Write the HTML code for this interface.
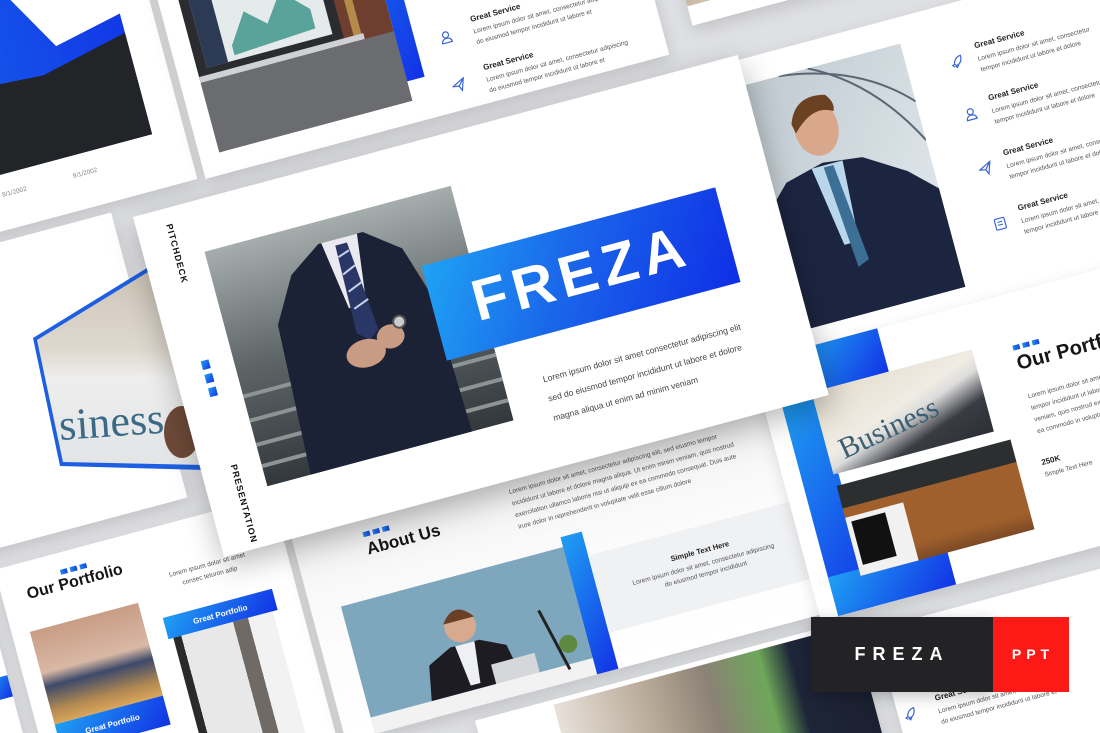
<!DOCTYPE html>
<html><head><meta charset="utf-8">
<style>
*{margin:0;padding:0;box-sizing:border-box}
html,body{width:1100px;height:733px;overflow:hidden}
body{background:#dfe0e3;font-family:"Liberation Sans",Arial,sans-serif;position:relative}
.board{position:absolute;left:0;top:0;transform:translate(133px,217px) rotate(-15deg);transform-origin:0 0}
.s{position:absolute;background:#fff;overflow:hidden;box-shadow:0 6px 16px rgba(0,0,0,.13)}
.a{position:absolute}
.lo{position:absolute;font-size:6.5px;line-height:11px;color:#555;white-space:nowrap}
.gs{position:absolute;font-size:8px;font-weight:bold;color:#222;white-space:nowrap}
.sq{position:absolute;display:flex;gap:3px}
.sq i{display:block;width:7px;height:5px;background:linear-gradient(90deg,#1e8ef0,#1540e0)}
.blue{background:linear-gradient(135deg,#1fa0f3,#1232e6)}
</style></head><body>

<div class="board">
  <div class="s" style="left:-600px;top:-400px;width:672px;height:380px">
    <svg class="a" style="left:270px;top:140px" width="370" height="185">
      <defs><linearGradient id="cb" x1="0" x2="1"><stop offset="0" stop-color="#1a7ef0"/><stop offset="1" stop-color="#1238e6"/></linearGradient></defs>
      <polygon points="0,80 40,125 110,30 190,55 260,5 300,75 370,60 370,185 0,185" fill="url(#cb)"/>
      <polygon points="0,130 60,110 120,125 200,95 280,100 370,80 370,185 0,185" fill="#232427"/>
    </svg>
    <div class="lo" style="left:260px;top:340px;color:#888;word-spacing:46px">5/1/2002 6/1/2002 7/1/2002 8/1/2002 9/1/2002</div>
  </div>
  <div class="s" style="left:80px;top:-380px;width:480px;height:362px">
    <svg class="a" style="left:20px;top:0" width="200" height="340">
      <rect width="200" height="340" fill="#5a5552"/>
      <rect x="130" y="0" width="70" height="340" fill="#6e3f2e"/>
      <rect x="160" y="0" width="8" height="340" fill="#b58a4a"/>
      <polygon points="0,150 150,150 150,265 0,265" fill="#2a2c30"/>
      <polygon points="10,160 140,160 140,255 10,255" fill="#e4ebea"/>
      <rect x="10" y="160" width="22" height="95" fill="#2d3a55"/>
      <polygon points="40,240 60,210 80,228 100,200 125,225 125,245 40,250" fill="#5aa39a"/>
      <rect x="0" y="268" width="200" height="72" fill="#6a6c70"/>
      <rect x="0" y="262" width="170" height="6" fill="#cfd1d4"/>
    </svg>
    <div class="a blue" style="left:220px;top:0;width:18px;height:320px"></div>
    <svg class="a" style="left:262px;top:230px" width="14" height="14"><path d="M1 7L13 1L9 13L7 8Z" fill="none" stroke="#3a66d6" stroke-width="1.2"/></svg>
    <div class="gs" style="left:297px;top:222px">Great Service</div>
    <div class="lo" style="left:297px;top:234px">Lorem ipsum dolor sit amet, consectetur adipiscing<br>do eiusmod tempor incididunt ut labore et</div>
    <svg class="a" style="left:262px;top:280px" width="14" height="14"><circle cx="7" cy="5" r="3" fill="none" stroke="#3a66d6" stroke-width="1.2"/><path d="M2 13c0-3 2.5-4.5 5-4.5s5 1.5 5 4.5z" fill="none" stroke="#3a66d6" stroke-width="1.2"/></svg>
    <div class="gs" style="left:297px;top:272px">Great Service</div>
    <div class="lo" style="left:297px;top:284px">Lorem ipsum dolor sit amet, consectetur adipiscing<br>do eiusmod tempor incididunt ut labore et</div>
    <svg class="a" style="left:262px;top:330px" width="14" height="14"><path d="M1 7L13 1L9 13L7 8Z M7 8L13 1" fill="none" stroke="#3a66d6" stroke-width="1.2"/></svg>
    <div class="gs" style="left:297px;top:322px">Great Service</div>
    <div class="lo" style="left:297px;top:334px">Lorem ipsum dolor sit amet, consectetur adipiscing<br>do eiusmod tempor incididunt ut labore et</div>
  </div>
  <div class="s" style="left:590px;top:-400px;width:626px;height:360px">
    <div class="a" style="left:0;top:0;width:270px;height:340px;background:linear-gradient(90deg,#c9b8a4,#efe9e2 40%,#5d5f63 70%,#d8d8d8)"></div>
  </div>
  <div class="s" style="left:-680px;top:-10px;width:660px;height:295px">
    <div class="lo" style="left:390px;top:158px">Lorem ipsum dolor sit amet<br>tempor incididunt ut labore<br>veniam, quis nostrud exerc<br>ea commodo in voluptate</div>
  </div>
  <div class="s" style="left:-860px;top:305px;width:620px;height:352px">
    <div class="a blue" style="left:595px;top:105px;width:25px;height:22px"></div>
  </div>
  <div class="s" style="left:-225px;top:305px;width:287px;height:352px">
    <div class="sq" style="left:63px;top:17px"><i></i><i></i><i></i></div>
    <div class="a" style="left:25px;top:24px;font-size:16px;font-weight:bold;color:#151515;white-space:nowrap">Our Portfolio</div>
    <div class="lo" style="left:150px;top:45px;width:113px;text-align:center">Lorem ipsum dolor sit amet<br>consec teturon adip</div>
    <div class="a" style="left:18px;top:69px;width:112px;height:96px;background:linear-gradient(180deg,#c99d85 0%,#d8b8a5 45%,#3d4a6a 60%,#b48a52 85%,#d9a65a)"></div>
    <div class="a blue" style="left:18px;top:165px;width:112px;height:30px;color:#fff;font-size:8px;font-weight:bold;text-align:center;padding-top:10px">Great Portfolio</div>
    <div class="a blue" style="left:150px;top:90px;width:113px;height:22px;color:#fff;font-size:8px;font-weight:bold;text-align:center;padding-top:7px">Great Portfolio</div>
    <div class="a" style="left:155px;top:112px;width:103px;height:130px;background:linear-gradient(90deg,#2a2a2a 0 8%,#e8e8e8 8% 60%,#6f6a66 60% 75%,#f2f2f2 75%)"></div>
  </div>
  <div class="s" style="left:70px;top:300px;width:500px;height:262px;background:linear-gradient(180deg,#e6e6e8 0%,#fafafa 45%,#fff)">
    <div class="sq" style="left:70px;top:64px"><i></i><i></i><i></i></div>
    <div class="a" style="left:70px;top:72px;font-size:17px;font-weight:bold;color:#151515">About Us</div>
    <div class="lo" style="left:222px;top:58px;line-height:12px">Lorem ipsum dolor sit amet, consectetur adipiscing elit, sed eiusmo tempor<br>incididunt ut labore et dolore magna aliqua. Ut enim minim veniam, quis nostrud<br>exercitation ullamco laboris nisi ut aliquip ex ea commodo consequat. Duis aute<br>irure dolor in reprehenderit in voluptate velit esse cillum dolore</div>
    <svg class="a" style="left:30px;top:130px" width="235" height="132">
      <rect width="235" height="132" fill="#7ea7bd"/>
      <polygon points="60,132 70,80 95,68 125,68 150,80 160,132" fill="#1c1c22"/>
      <polygon points="100,68 120,68 115,110 105,110" fill="#eef0f3"/>
      <circle cx="110" cy="50" r="16" fill="#d7a98f"/>
      <path d="M94 44q16-22 32 0" fill="#6a3f25"/>
      <rect x="130" y="95" width="45" height="30" fill="#d5d7da"/>
      <rect x="0" y="115" width="235" height="17" fill="#f2f2f2"/>
      <line x1="190" y1="55" x2="205" y2="120" stroke="#222" stroke-width="3"/>
      <circle cx="210" cy="95" r="9" fill="#5d8a3e"/>
    </svg>
    <div class="a blue" style="left:260px;top:120px;width:22px;height:142px"></div>
    <div class="a" style="left:282px;top:145px;width:218px;height:80px;background:#f0f1f3;text-align:center">
      <div style="font-size:7.5px;font-weight:bold;color:#222;margin-top:20px">Simple Text Here</div>
      <div style="font-size:6.5px;color:#555;line-height:10px;margin-top:5px">Lorem ipsum dolor sit amet, consectetur adipiscing<br>do eiusmod tempor incididunt</div>
    </div>
  </div>
  <div class="s" style="left:200px;top:575px;width:390px;height:352px">
    <div class="a" style="left:80px;top:5px;width:310px;height:140px;background:linear-gradient(90deg,#e7e1da,#b9aa98 30%,#8b8175 50%,#6ea75a 68%,#1e2538 78%,#1b2030)"></div>
  </div>
  <div class="s" style="left:600px;top:5px;width:626px;height:295px">
    <svg class="a" style="left:0;top:26px" width="186" height="252">
      <defs><linearGradient id="tb" x1="0" y1="0" x2="1" y2="1"><stop offset="0" stop-color="#bcc6cc"/><stop offset="1" stop-color="#e6edf2"/></linearGradient></defs>
      <rect width="186" height="252" fill="url(#tb)"/>
      <path d="M60 0 Q140 10 186 60 M90 0 Q150 30 186 100" stroke="#5a6672" stroke-width="2" fill="none"/>
      <polygon points="0,252 5,140 40,105 80,95 120,100 160,125 186,150 186,252" fill="#1c2540"/>
      <polygon points="68,98 100,98 95,180 80,180" fill="#b9d6ea"/>
      <polygon points="80,100 90,100 100,200 88,205" fill="#3c6f96"/>
      <ellipse cx="83" cy="60" rx="22" ry="28" fill="#d9a88c"/>
      <path d="M60 50 Q70 22 100 30 Q108 40 104 48 Q85 36 62 60Z" fill="#6b4124"/>
    </svg>
    <svg class="a" style="left:229px;top:51px" width="14" height="14"><path d="M12 2c-4 0-7 3-8 7l2 2c4-1 6-4 6-9zM4 9l-2 1 2 2M5 11l1 2 2-2" fill="none" stroke="#3a66d6" stroke-width="1.2"/></svg>
    <div class="gs" style="left:257px;top:43px">Great Service</div>
    <div class="lo" style="left:257px;top:56px">Lorem ipsum dolor sit amet, consectetur<br>tempor incididunt ut labore et dolore</div>
    <svg class="a" style="left:229px;top:105px" width="14" height="14"><circle cx="7" cy="5" r="3" fill="none" stroke="#3a66d6" stroke-width="1.2"/><path d="M2 13c0-3 2.5-4.5 5-4.5s5 1.5 5 4.5z" fill="none" stroke="#3a66d6" stroke-width="1.2"/></svg>
    <div class="gs" style="left:257px;top:97px">Great Service</div>
    <div class="lo" style="left:257px;top:110px">Lorem ipsum dolor sit amet, consectetur<br>tempor incididunt ut labore et dolore</div>
    <svg class="a" style="left:229px;top:162px" width="14" height="14"><path d="M1 7L13 1L9 13L7 8Z M7 8L13 1" fill="none" stroke="#3a66d6" stroke-width="1.2"/></svg>
    <div class="gs" style="left:257px;top:154px">Great Service</div>
    <div class="lo" style="left:257px;top:167px">Lorem ipsum dolor sit amet, consectetur<br>tempor incididunt ut labore et dolore</div>
    <svg class="a" style="left:229px;top:219px" width="14" height="14"><rect x="2" y="1.5" width="10" height="11" rx="1" fill="none" stroke="#3a66d6" stroke-width="1.2"/><path d="M4.5 5h5M4.5 8h5" stroke="#3a66d6" stroke-width="1.1"/></svg>
    <div class="gs" style="left:257px;top:211px">Great Service</div>
    <div class="lo" style="left:257px;top:224px">Lorem ipsum dolor sit amet, consectetur<br>tempor incididunt ut labore et dolore</div>
  </div>
  <div class="s" style="left:560px;top:300px;width:626px;height:268px">
    <div class="a blue" style="left:50px;top:0;width:80px;height:45px"></div>
    <div class="a blue" style="left:18px;top:45px;width:37px;height:223px"></div>
    <div class="a blue" style="left:18px;top:228px;width:122px;height:40px"></div>
    <div class="a" style="left:50px;top:45px;width:166px;height:85px;background:linear-gradient(160deg,#e4dccd 0%,#f0ece4 45%,#dcdcdc 55%,#3a3c44 75%,#2d2f36)">
      <div style="position:absolute;left:12px;top:38px;font-family:'Liberation Serif',serif;font-size:30px;color:#3d5f73;transform:rotate(-10deg)">Business</div>
    </div>
    <div class="a" style="left:50px;top:142px;width:180px;height:93px;background:linear-gradient(180deg,#2c2f30 0 25%,#a0602e 25% 80%,#7d4a25);"></div>
    <div class="a" style="left:50px;top:175px;width:60px;height:60px;background:#f1f1f1"></div>
    <div class="a" style="left:55px;top:180px;width:35px;height:45px;background:#111"></div>
    <div class="sq" style="left:256px;top:52px"><i></i><i></i><i></i></div>
    <div class="a" style="left:256px;top:60px;font-size:20px;font-weight:bold;color:#151515;white-space:nowrap">Our Portfolio</div>
    <div class="lo" style="left:258px;top:100px;line-height:12px">Lorem ipsum dolor sit amet,<br>tempor incididunt ut labore<br>veniam, quis nostrud exer<br>ea commodo in voluptate</div>
    <div class="a" style="left:254px;top:168px;font-size:8px;font-weight:bold;color:#222">250K</div>
    <div class="lo" style="left:254px;top:180px">Simple Text Here</div>
  </div>
  <div class="s" style="left:610px;top:590px;width:626px;height:352px">
    <svg class="a" style="left:5px;top:84px" width="14" height="14"><path d="M12 2c-4 0-7 3-8 7l2 2c4-1 6-4 6-9zM4 9l-2 1 2 2M5 11l1 2 2-2" fill="none" stroke="#3a66d6" stroke-width="1.2"/></svg>
    <div class="gs" style="left:40px;top:78px">Great Service</div>
    <div class="lo" style="left:40px;top:91px">Lorem ipsum dolor sit amet, consectetur<br>do eiusmod tempor incididunt ut labore et</div>
  </div>
</div>

<svg class="a" style="left:0;top:0" width="220" height="480">
  <defs><linearGradient id="np" x1="0" y1="0" x2="0" y2="1"><stop offset="0" stop-color="#cfc6b8"/><stop offset=".4" stop-color="#ded8cf"/><stop offset=".55" stop-color="#eeeeee"/><stop offset="1" stop-color="#e2e4e6"/></linearGradient></defs>
  <polygon points="33,338 147,268 205,268 205,470 60,466" fill="#1d5fe0"/>
  <polygon points="37,340 148,272 205,272 205,465 63,462" fill="url(#np)"/>
  <text x="60" y="440" font-family="Liberation Serif,serif" font-size="44" fill="#3a6a86" transform="rotate(-4 60 440)">siness</text>
  <ellipse cx="182" cy="432" rx="18" ry="26" fill="#6e4a38"/>
</svg>

<div class="board">
  <div class="s" style="left:0;top:0;width:626px;height:352px;box-shadow:0 10px 30px rgba(0,0,0,.28)">
    <div class="a" style="left:28px;top:16px;writing-mode:vertical-rl;font-size:9px;font-weight:bold;letter-spacing:1px;color:#111">PITCHDECK</div>
    <div class="a blue" style="left:28px;top:157px;width:8px;height:9px"></div>
    <div class="a blue" style="left:28px;top:171px;width:8px;height:9px"></div>
    <div class="a blue" style="left:28px;top:185px;width:8px;height:9px"></div>
    <div class="a" style="left:28px;top:265px;writing-mode:vertical-rl;font-size:9px;font-weight:bold;letter-spacing:1px;color:#111">PRESENTATION</div>
    <svg class="a" style="left:60px;top:52px" width="255" height="243">
      <defs><linearGradient id="bg" x1="0" y1="0" x2="0" y2="1"><stop offset="0" stop-color="#a6adad"/><stop offset=".5" stop-color="#5e6567"/><stop offset="1" stop-color="#33383d"/></linearGradient></defs>
      <rect width="255" height="243" fill="url(#bg)"/>
      <g stroke="#8d9494" stroke-width="4"><line x1="0" y1="150" x2="255" y2="150"/><line x1="0" y1="175" x2="255" y2="175"/><line x1="0" y1="200" x2="255" y2="200"/><line x1="0" y1="222" x2="255" y2="222"/></g>
      <polygon points="45,243 52,90 78,45 112,22 158,22 192,48 208,100 212,243" fill="#1b2236"/>
      <polygon points="115,22 152,22 143,92 125,92" fill="#e9e9ef"/>
      <polygon points="128,28 140,28 148,120 137,128 126,118" fill="#2a3766"/>
      <g stroke="#c9d2ea" stroke-width="2"><line x1="128" y1="40" x2="140" y2="36"/><line x1="128" y1="58" x2="142" y2="52"/><line x1="129" y1="76" x2="144" y2="70"/><line x1="130" y1="94" x2="146" y2="88"/></g>
      <ellipse cx="130" cy="140" rx="20" ry="14" fill="#c99b82"/>
      <ellipse cx="158" cy="130" rx="14" ry="12" fill="#c99b82"/>
      <circle cx="170" cy="118" r="6" fill="#ccc" stroke="#555" stroke-width="2"/>
    </svg>
    <div class="a" style="left:266px;top:122px;width:304px;height:98px;background:linear-gradient(120deg,#1fa3f4,#1a66ea 45%,#0f2ee6);color:#fff;font-size:58px;font-weight:bold;letter-spacing:6px;text-align:center;line-height:98px">FREZA</div>
    <div class="a" style="left:354px;top:253px;font-size:8.6px;line-height:20px;color:#444;white-space:nowrap">Lorem ipsum dolor sit amet consectetur adipiscing elit<br>sed do eiusmod tempor incididunt ut labore et dolore<br>magna aliqua ut enim ad minim veniam</div>
  </div>
</div>

<div class="a" style="left:811px;top:617px;width:182px;height:75px;background:#232325;color:#fff;font-size:18px;font-weight:bold;letter-spacing:7px;text-align:center;line-height:75px;box-shadow:0 4px 14px rgba(0,0,0,.25)">FREZA</div>
<div class="a" style="left:993px;top:617px;width:76px;height:75px;background:#fd1a16;color:#fff;font-size:14px;font-weight:bold;letter-spacing:5px;text-align:center;line-height:75px;padding-left:4px">PPT</div>
</body></html>
